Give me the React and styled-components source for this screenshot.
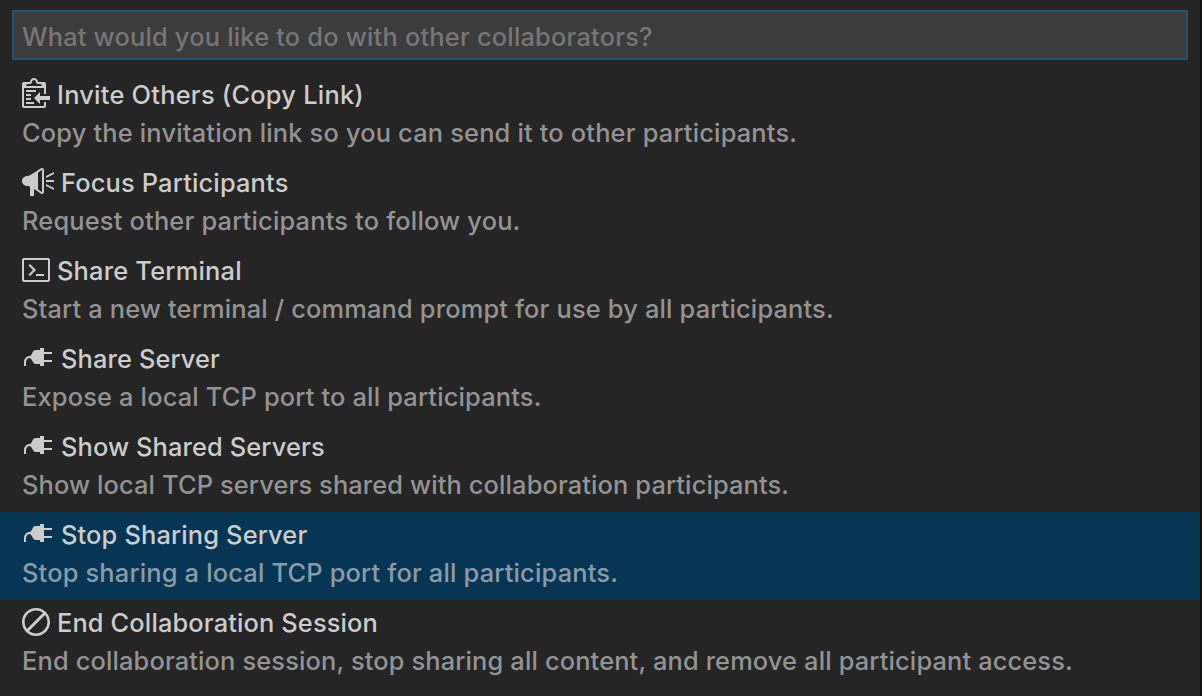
import React from "react";
import styled, { createGlobalStyle } from "styled-components";

const GlobalStyle = createGlobalStyle`
  * { box-sizing: border-box; }
  body { margin: 0; background: #252526; overflow: hidden; }
`;

const QuickPick = styled.main`
  width: 1202px;
  height: 696px;
  padding-top: 10px;
  background: #252525;
  border-right: 2px solid #111111;
  font-family: Inter, "Liberation Sans", sans-serif;
  font-size: 25.4px;
  font-weight: 500;
  color: #cccccc;
`;

const SearchInput = styled.input`
  display: block;
  width: 1176px;
  height: 50px;
  margin: 0 0 12px 12px;
  padding: 3px 8px 0;
  border: 2px solid #1d547e;
  border-radius: 0;
  outline: none;
  background: #3c3c3c;
  color: #cccccc;
  font: inherit;
  letter-spacing: ${(p) => p.$spacing}px;
  &::placeholder { color: #767676; opacity: 1; }
`;

const List = styled.ul`
  margin: 0;
  padding: 0;
  list-style: none;
`;

const Row = styled.li`
  height: 88px;
  padding: 4px 22px 0;
  background: ${(p) => (p.$active ? "#073655" : "transparent")};
`;

const Title = styled.div`
  display: flex;
  height: 38px;
`;

const IconSlot = styled.span`
  flex: none;
  width: ${(p) => p.$width}px;
  padding: ${(p) => p.$top}px 0 0 ${(p) => p.$left}px;
`;

const Glyph = styled.svg`
  display: block;
  height: 32px;
  fill: #cccccc;
`;

const Label = styled.span`
  line-height: 38px;
  white-space: pre;
  letter-spacing: ${(p) => p.$spacing}px;
`;

const Detail = styled.div`
  line-height: 38px;
  white-space: pre;
  color: ${(p) => (p.$active ? "#8a9ba8" : "#939393")};
  letter-spacing: ${(p) => p.$spacing}px;
`;

const ICONS = {
  clippy: { box: 14, slot: 35, left: 0, top: 0, d: "M2 13h4v1H2v-1zm5-6H2v1h5V7zm2 3V8l-3 3 3 3v-2h5v-2H9zM4.5 9H2v1h2.5V9zM2 12h2.5v-1H2v1zm9 1h1v2c-.02.28-.11.52-.3.7-.19.18-.42.28-.7.3H1c-.55 0-1-.45-1-1V4c0-.55.45-1 1-1h3c0-1.11.89-2 2-2 1.11 0 2 .89 2 2h3c.55 0 1 .45 1 1v5h-1V6H1v9h10v-2zM2 5h8c0-.55-.45-1-1-1H8c-.55 0-1-.45-1-1s-.45-1-1-1-1 .45-1 1-.45 1-1 1H3c-.55 0-1 .45-1 1z" },
  megaphone: { box: 16, slot: 39, left: 0, top: 2, d: "M10 1c-.17 0-.36.05-.52.14C8.04 2.02 4.5 4.58 3 5c-1.38 0-3 .67-3 2.5S1.63 10 3 10c.3.08.64.23 1 .41V15h2v-3.45c1.34.86 2.69 1.83 3.48 2.31.16.09.34.14.52.14.52 0 1-.42 1-1V2c0-.58-.48-1-1-1zm0 12c-.38-.23-.89-.58-1.5-1-.16-.11-.33-.22-.5-.34V3.31c.16-.11.31-.2.47-.31.61-.41 1.16-.77 1.53-1v11zm2-6h4v1h-4V7zm0 2l4 2v1l-4-2V9zm4-6v1l-4 2V5l4-2z" },
  terminal: { box: 14, slot: 35, left: 0, top: 2, d: "M7 10h4v1H7v-1zm-3 1l3-3-3-3-.75.75L5.5 8l-2.25 2.25L4 11zm10-8v10c0 .55-.45 1-1 1H1c-.55 0-1-.45-1-1V3c0-.55.45-1 1-1h12c.55 0 1 .45 1 1zm-1 0H1v10h12V3z" },
  plug: { box: 14, slot: 39, left: 2, top: 2, d: "M14 6V5h-4V3H8v1H6c-1.03 0-1.77.81-2 2L3 7c-1.66 0-3 1.34-3 3v2h1v-2c0-1.11.89-2 2-2l1 1c.25 1.16.98 2 2 2h2v1h2v-2h4V9h-4V6h4z" },
  slash: { box: 14, slot: 35, left: 0, top: 2, d: "M7 1C3.14 1 0 4.14 0 8s3.14 7 7 7 7-3.14 7-7-3.14-7-7-7zm0 1.3c1.3 0 2.5.44 3.47 1.17l-8 8A5.755 5.755 0 0 1 1.3 8c0-3.14 2.56-5.7 5.7-5.7zm0 11.41c-1.3 0-2.5-.44-3.47-1.17l8-8c.73.97 1.17 2.17 1.17 3.47 0 3.14-2.56 5.7-5.7 5.7z" },
};

const ITEMS = [
  { icon: "clippy", label: "Invite Others (Copy Link)", ls: 0.24, detail: "Copy the invitation link so you can send it to other participants.", ds: 0.18 },
  { icon: "megaphone", label: "Focus Participants", ls: 0.17, detail: "Request other participants to follow you.", ds: 0.19 },
  { icon: "terminal", label: "Share Terminal", ls: 0.21, detail: "Start a new terminal / command prompt for use by all participants.", ds: 0.165 },
  { icon: "plug", label: "Share Server", ls: 0.13, detail: "Expose a local TCP port to all participants.", ds: 0.17 },
  { icon: "plug", label: "Show Shared Servers", ls: 0.13, detail: "Show local TCP servers shared with collaboration participants.", ds: 0.125 },
  { icon: "plug", label: "Stop Sharing Server", ls: 0.16, detail: "Stop sharing a local TCP port for all participants.", ds: 0.18, active: true },
  { icon: "slash", label: "End Collaboration Session", ls: 0.14, detail: "End collaboration session, stop sharing all content, and remove all participant access.", ds: 0.145 },
];

function Icon({ name }) {
  const icon = ICONS[name];
  return (
    <IconSlot $width={icon.slot} $left={icon.left} $top={icon.top}>
      <Glyph width={icon.box * 2} viewBox={`0 0 ${icon.box} 16`} aria-hidden="true">
        <path fillRule="evenodd" d={icon.d} />
      </Glyph>
    </IconSlot>
  );
}

export default function App() {
  return (
    <>
      <GlobalStyle />
      <QuickPick>
        <SearchInput $spacing={0.2} placeholder="What would you like to do with other collaborators?" />
        <List>
          {ITEMS.map((item) => (
            <Row key={item.label} $active={item.active}>
              <Title>
                <Icon name={item.icon} />
                <Label $spacing={item.ls}>{item.label}</Label>
              </Title>
              <Detail $active={item.active} $spacing={item.ds}>{item.detail}</Detail>
            </Row>
          ))}
        </List>
      </QuickPick>
    </>
  );
}
